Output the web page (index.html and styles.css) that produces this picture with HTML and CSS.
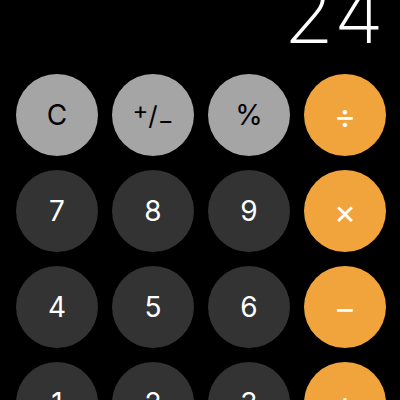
FILE: index.html
```html
<!DOCTYPE html>
<html>
<head>
<meta charset="utf-8">
<link rel="stylesheet" href="styles.css">
</head>
<body>
<div class="calc">
  <div class="display"><span class="value">24</span></div>
  <div class="keys">
    <div class="key fn">C</div>
    <div class="key fn"><span class="pm"><sup>+</sup>/<sub>−</sub></span></div>
    <div class="key fn">%</div>
    <div class="key op">÷</div>
    <div class="key num">7</div>
    <div class="key num">8</div>
    <div class="key num">9</div>
    <div class="key op">×</div>
    <div class="key num">4</div>
    <div class="key num">5</div>
    <div class="key num">6</div>
    <div class="key op">−</div>
    <div class="key num">1</div>
    <div class="key num">2</div>
    <div class="key num">3</div>
    <div class="key op">+</div>
  </div>
</div>
</body>
</html>
```
FILE: styles.css
```css
html, body {
  margin: 0;
  padding: 0;
  background: #000;
  overflow: hidden;
}
.calc {
  width: 400px;
  height: 400px;
  overflow: hidden;
  font-family: Inter, "Liberation Sans", sans-serif;
}
.display {
  height: 74px;
  display: flex;
  justify-content: flex-end;
  padding-right: 15px;
  overflow: hidden;
}
.value {
  color: #fff;
  font-size: 82px;
  font-weight: 200;
  line-height: 82px;
  margin-top: -27px;
  letter-spacing: 1px;
}
.keys {
  display: grid;
  grid-template-columns: repeat(4, 82px);
  grid-auto-rows: 82px;
  gap: 14px;
  padding-left: 16px;
}
.key {
  border-radius: 50%;
  display: flex;
  align-items: center;
  justify-content: center;
  font-size: 28px;
  font-weight: 400;
}
.fn {
  background: #a5a5a5;
  color: #000;
}
.num {
  background: #333;
  color: #fff;
}
.op {
  background: #f1a33c;
  color: #fff;
  font-size: 34px;
}
.pm {
  font-size: 26px;
}
.pm sup {
  font-size: 24px;
  vertical-align: 6px;
}
.pm sub {
  font-size: 24px;
  vertical-align: -4px;
}
```
